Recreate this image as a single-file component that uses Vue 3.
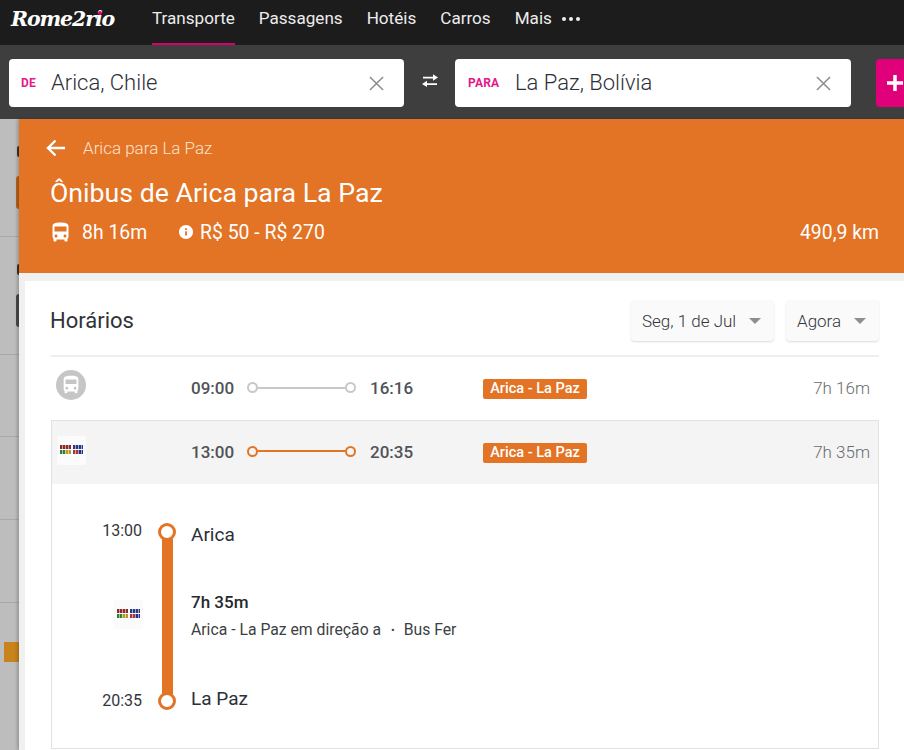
<script setup>
const nav = ['Transporte', 'Passagens', 'Hotéis', 'Carros', 'Mais']
const sideRows = [
  { h: 118, items: ['dot-dark', 'bar-orange'] },
  { h: 118, items: ['dot-dark', 'bar-dark'] },
  { h: 82, items: [] },
  { h: 83, items: [] },
  { h: 83, items: [] },
  { h: 148, items: ['pic'] }
]
const busPath = 'M4 16c0 .88.39 1.67 1 2.22V20c0 .55.45 1 1 1h1c.55 0 1-.45 1-1v-1h8v1c0 .55.45 1 1 1h1c.55 0 1-.45 1-1v-1.78c.61-.55 1-1.34 1-2.22V6c0-3.5-3.58-4-8-4s-8 .5-8 4v10zm3.5 1c-.83 0-1.5-.67-1.5-1.5S6.67 14 7.5 14s1.5.67 1.5 1.5S8.33 17 7.5 17zm9 0c-.83 0-1.5-.67-1.5-1.5s.67-1.5 1.5-1.5 1.5.67 1.5 1.5-.67 1.5-1.5 1.5zm1.5-6H6V6h12v5z'
</script>

<template>
  <div class="page">
    <header class="top">
      <div class="logo">Rome2rio<span class="logo-dot"></span></div>
      <nav class="nav">
        <a v-for="(n, i) in nav" :key="n" class="nav-item" :class="{ active: i === 0 }">{{ n }}</a>
        <span class="dots"><i></i><i></i><i></i></span>
      </nav>
    </header>

    <section class="search">
      <div class="field first">
        <span class="lab lab-de">DE</span>
        <span class="val">Arica, Chile</span>
        <svg class="x" viewBox="0 0 16 16"><path d="M1 1l14 14M15 1L1 15" /></svg>
      </div>
      <svg class="swap" viewBox="1 0 18 16"><path d="M3 3.800h10V1.300l5 3.200-5 3.200V5.600H3zM17 10.200H7V7.700l-5 3.200 5 3.200v-2.100h10z" /></svg>
      <div class="field second">
        <span class="lab lab-para">PARA</span>
        <span class="val">La Paz, Bolívia</span>
        <svg class="x" viewBox="0 0 16 16"><path d="M1 1l14 14M15 1L1 15" /></svg>
      </div>
      <button class="plus"><svg viewBox="0 0 18 18"><path d="M9 1v16M1 9h16" /></svg></button>
    </section>

    <div class="body">
      <aside class="side">
        <div v-for="(r, i) in sideRows" :key="i" class="side-row" :style="{ height: r.h + 'px' }">
          <span v-for="it in r.items" :key="it" :class="it"></span>
        </div>
      </aside>

      <main class="panel">
        <div class="hero">
          <div class="crumb">
            <svg class="back" viewBox="0 0 20 18"><path d="M19 9H2M9.500 1.500L2 9l7.500 7.500" /></svg>
            <span>Arica para La Paz</span>
          </div>
          <h1>Ônibus de Arica para La Paz</h1>
          <div class="facts">
            <svg class="bus" viewBox="3.500 1.500 17 20"><path :d="busPath" /></svg>
            <span class="dur">8h 16m</span>
            <svg class="info" viewBox="2 2 20 20"><path d="M12 2C6.480 2 2 6.480 2 12s4.480 10 10 10 10-4.480 10-10S17.520 2 12 2zm1.300 15h-2.600v-6h2.600v6zm0-8h-2.600V6.500h2.600V9z" /></svg>
            <span class="price">R$ 50 - R$ 270</span>
            <span class="km">490,9 km</span>
          </div>
        </div>

        <div class="gutter">
          <div class="card">
            <div class="card-head">
              <h2>Horários</h2>
              <div class="selects">
                <div class="select s-date">Seg, 1 de Jul<i class="caret"></i></div>
                <div class="select s-time">Agora<i class="caret"></i></div>
              </div>
            </div>

            <div class="row">
              <span class="badge">
                <svg viewBox="0 0 24 24"><path :d="busPath" /></svg>
              </span>
              <span class="t t1">09:00</span>
              <span class="track"><i></i><b></b><i></i></span>
              <span class="t">16:16</span>
              <span class="tag">Arica - La Paz</span>
              <span class="len">7h 16m</span>
            </div>

            <div class="open">
              <div class="row row-on">
                <span class="opic"><span class="mark"><i v-for="c in 4" :key="c"></i></span></span>
                <span class="t t1">13:00</span>
                <span class="track on"><i></i><b></b><i></i></span>
                <span class="t">20:35</span>
                <span class="tag">Arica - La Paz</span>
                <span class="len">7h 35m</span>
              </div>

              <div class="detail">
                <div class="d-times">
                  <span>13:00</span>
                  <span class="opic"><span class="mark"><i v-for="c in 4" :key="c"></i></span></span>
                  <span>20:35</span>
                </div>
                <div class="d-line"><i></i><b></b><i></i></div>
                <div class="d-text">
                  <div class="place">Arica</div>
                  <div class="leg">
                    <div class="leg-dur">7h 35m</div>
                    <div class="leg-info">Arica - La Paz em direção a <span class="sep">•</span> Bus Fer</div>
                  </div>
                  <div class="place">La Paz</div>
                </div>
              </div>
            </div>
          </div>
        </div>
      </main>
    </div>
  </div>
</template>

<style>
html, body { margin: 0; height: 100%; overflow: hidden; background: #f0f0f0; }
</style>

<style scoped>
.page {
  width: 904px;
  height: 750px;
  overflow: hidden;
  font-family: Roboto, "Liberation Sans", sans-serif;
  display: flex;
  flex-direction: column;
}
.top {
  height: 45px;
  flex: none;
  background: #1c1c1c;
  display: flex;
  align-items: flex-start;
  box-sizing: border-box;
}
.logo {
  position: relative;
  width: 140px;
  padding-left: 11px;
  box-sizing: border-box;
  font-family: "DejaVu Serif", serif;
  font-style: italic;
  font-weight: 700;
  font-size: 20.500px;
  letter-spacing: -1.100px;
  line-height: 38px;
  color: #fff;
  flex: none;
  margin-right: 12px;
}
.logo-dot {
  position: absolute;
  left: 98px;
  top: 11px;
  width: 4px;
  height: 4px;
  border-radius: 50%;
  background: #e0007a;
}
.nav { display: flex; height: 45px; align-items: flex-start; gap: 24px; }
.nav-item {
  height: 45px;
  box-sizing: border-box;
  line-height: 37px;
  font-size: 17.100px;
  color: #ececec;
}
.nav-item.active { border-bottom: 2px solid #d6006f; }
.dots { display: flex; gap: 3px; height: 37px; align-items: center; margin-left: -14px; }
.dots i { width: 4px; height: 4px; border-radius: 50%; background: #eee; }

.search {
  height: 74px;
  flex: none;
  background: #3e3e3e;
  display: flex;
  align-items: flex-start;
  padding: 14px 0 0 9px;
  box-sizing: border-box;
}
.field {
  height: 48px;
  background: #fff;
  border-radius: 4px;
  display: flex;
  align-items: center;
  box-sizing: border-box;
  flex: none;
  position: relative;
}
.first { width: 395px; }
.second { width: 396px; }
.lab { font-size: 12px; font-weight: 700; color: #e5188a; letter-spacing: .2px; }
.lab-de { width: 30px; margin-left: 12px; }
.lab-para { width: 47px; margin-left: 13px; }
.val { font-size: 22px; font-weight: 300; color: #2c3038; flex: 1; margin-top: -2px; }
.x { width: 15px; height: 15px; margin-right: 20px; fill: none; stroke: #8c8c8c; stroke-width: 1.600; }
.swap { width: 20px; height: 16px; margin: 14px 15px 0 16px; flex: none; fill: #fff; }
.plus {
  margin-left: 25px;
  width: 60px;
  height: 48px;
  border: 0;
  border-radius: 4px;
  background: #e0007a;
  padding: 0 0 0 10px;
  flex: none;
  display: flex;
  align-items: center;
}
.plus svg { width: 18px; height: 18px; fill: none; stroke: #fff; stroke-width: 3.500; }

.body { flex: 1; display: flex; min-height: 0; }
.side { width: 19px; flex: none; background: #bdbdbd; display: flex; flex-direction: column; }
.side-row {
  box-sizing: border-box;
  border-bottom: 1px solid #a9a9a9;
  flex: none;
  position: relative;
  display: flex;
  flex-direction: column;
  align-items: flex-end;
}
.side-row:last-child { border-bottom: 0; }
.dot-dark { width: 2px; height: 11px; margin-top: 27px; background: #3e3427; border-radius: 3px 0 0 3px; }
.bar-orange { width: 3px; height: 33px; margin-top: 19px; background: #b8641f; border-radius: 3px 0 0 3px; }
.bar-dark { width: 3px; height: 33px; margin-top: 19px; background: #4a4a4a; border-radius: 3px 0 0 3px; }
.pic { width: 15px; height: 20px; margin-top: 39px; background: #c8841c; }

.panel {
  flex: 1;
  min-width: 0;
  display: flex;
  flex-direction: column;
  box-shadow: -2px 0 3px rgba(0, 0, 0, .2);
  position: relative;
  background: #f0f0f0;
}
.hero {
  height: 154px;
  flex: none;
  background: #e37325;
  color: #fff;
  box-sizing: border-box;
  padding: 18px 25px 0 31px;
}
.crumb { display: flex; align-items: center; height: 22px; margin-left: -4px; }
.back { width: 20px; height: 18px; margin-right: 17px; fill: none; stroke: #fff; stroke-width: 2.400; }
.crumb span { font-size: 17px; font-weight: 300; color: #fde3cf; }
h1 { font-size: 26.700px; font-weight: 400; margin: 16px 0 0; line-height: 36px; }
.facts { display: flex; align-items: center; margin-top: 8px; height: 26px; font-size: 19.400px; }
.bus { width: 17px; height: 20px; fill: #fff; margin: 0 13px 0 2px; }
.dur { width: 97px; }
.info { width: 14px; height: 14px; fill: #fff; margin-right: 7px; }
.km { margin-left: auto; font-weight: 400; }

.gutter { flex: 1; padding: 8px 0 0 6px; min-height: 0; }
.card { background: #fff; height: 100%; padding: 0 25px; box-sizing: border-box; }
.card-head {
  height: 76px;
  box-sizing: border-box;
  border-bottom: 2px solid #eeeeee;
  display: flex;
  align-items: flex-start;
  justify-content: space-between;
  padding-top: 19px;
  margin-left: 1px;
}
h2 { font-size: 22px; font-weight: 400; margin: 8px 0 0 -1px; color: #2f3338; line-height: 26px; }
.selects { display: flex; gap: 12px; }
.select {
  height: 41px;
  box-sizing: border-box;
  background: #fafafa;
  border-radius: 4px;
  box-shadow: 0 1px 2px rgba(0, 0, 0, .14);
  display: flex;
  align-items: center;
  font-size: 17px;
  font-weight: 300;
  color: #33363b;
  padding: 0 13px 0 11px;
}
.s-date { width: 143px; justify-content: space-between; }
.s-time { width: 93px; justify-content: space-between; }
.caret { width: 0; height: 0; border: 6px solid transparent; border-top-color: #8e8e8e; border-bottom: 0; }

.row {
  height: 63px;
  display: flex;
  align-items: center;
  box-sizing: border-box;
  padding: 0 9px 0 5px;
  font-size: 17px;
  margin-left: 1px;
}
.badge {
  width: 30px;
  height: 30px;
  border-radius: 50%;
  background: #c6c6c6;
  display: flex;
  align-items: center;
  justify-content: center;
  margin-top: -7px;
  flex: none;
}
.badge svg { width: 22px; height: 22px; fill: #fff; }
.t { font-weight: 500; color: #4f5358; width: 43px; margin-top: -1px; }
.t1 { margin-left: 105px; }
.track { display: flex; align-items: center; width: 109px; margin: -2px 14px 0 13px; --c: #c8c8c8; }
.track.on { --c: #e37325; margin-top: -3px; }
.track i { width: 11px; height: 11px; box-sizing: border-box; border: 2.500px solid var(--c); border-radius: 50%; flex: none; }
.track b { flex: 1; height: 2px; background: var(--c); }
.tag {
  margin-left: 70px;
  width: 104px;
  height: 20px;
  background: #e37325;
  border-radius: 2px;
  color: #fff;
  font-size: 14.500px;
  font-weight: 500;
  line-height: 20px;
  text-align: center;
  flex: none;
}
.len { margin-left: auto; color: #6a6c70; font-weight: 300; margin-top: -1px; }

.open { border: 1px solid #e2e2e2; margin-left: 1px; }
.row-on { background: #f4f4f4; margin: 0; padding: 0 8px 0 5px; height: 63px; }
.opic {
  width: 29px;
  height: 29px;
  background: #fbfbfb;
  display: flex;
  align-items: center;
  justify-content: center;
  flex: none;
  margin-top: -4px;
}
.mark {
  display: grid;
  grid-template-columns: 1fr 1fr;
  grid-template-rows: 1fr 1fr;
  gap: 1px 2px;
  width: 23px;
  height: 9px;
  margin-top: -3px;
}
.mark i { position: relative; }
.mark i::after {
  content: "";
  position: absolute;
  inset: 0;
  background: repeating-linear-gradient(90deg, transparent 0 2px, rgba(255, 255, 255, .55) 2px 3px);
}
.mark i:nth-child(1) { background: #8a2a2a; }
.mark i:nth-child(2) { background: #2a3a8a; }
.mark i:nth-child(3) { background: linear-gradient(90deg, #2f7d3a 50%, #b09a2a 50%); }
.mark i:nth-child(4) { background: linear-gradient(90deg, #a33 50%, #24308a 50%); }

.detail {
  height: 264px;
  box-sizing: border-box;
  padding: 38px 0 0 49px;
  display: flex;
  align-items: flex-start;
}
.d-times {
  width: 41px;
  height: 188px;
  display: flex;
  flex-direction: column;
  justify-content: space-between;
  align-items: flex-end;
  font-size: 16px;
  font-weight: 400;
  color: #33363b;
  line-height: 18px;
}
.d-times .opic { margin: -3px -1px 0 0; }
.d-line {
  width: 18px;
  height: 187px;
  margin: 1px 15px 0 16px;
  display: flex;
  flex-direction: column;
  align-items: center;
  flex: none;
}
.d-line i { width: 18px; height: 18px; box-sizing: border-box; border: 3.500px solid #e37325; border-radius: 50%; background: #fff; flex: none; z-index: 1; }
.d-line b { width: 11px; flex: 1; background: #e37325; margin: -2px 0; }
.d-text {
  height: 188px;
  display: flex;
  flex-direction: column;
  justify-content: space-between;
  color: #2c3038;
}
.place { font-size: 19px; line-height: 24px; margin-top: 1px; }
.place:last-child { margin-bottom: -1px; }
.leg { margin-top: -2px; }
.leg-dur { font-size: 17px; font-weight: 500; line-height: 22px; color: #26292e; }
.leg-info { font-size: 15.750px; line-height: 20px; margin-top: 7px; color: #3c3f44; }
.sep { margin: 0 5px 0 6px; font-size: 11px; vertical-align: 1px; }
</style>
